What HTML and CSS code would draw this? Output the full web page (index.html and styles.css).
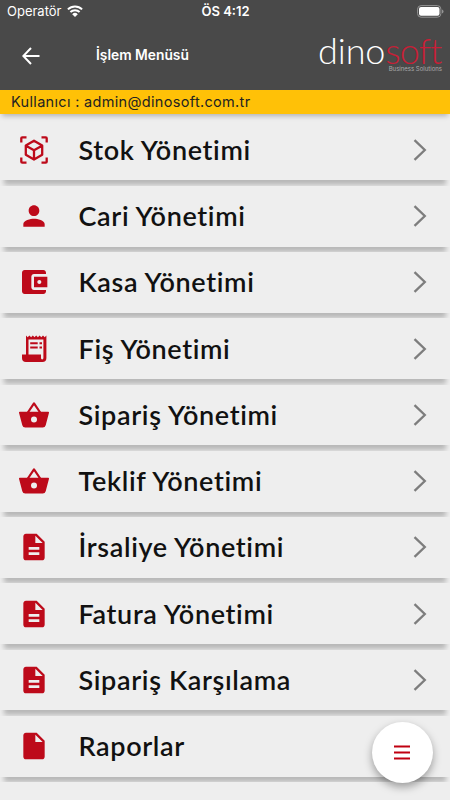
FILE: index.html
```
<!DOCTYPE html>
<html lang="tr">
<head>
  <meta charset="UTF-8">
  <title>İşlem Menüsü</title>
  <link rel="stylesheet" href="styles.css">
</head>
<body>
  <svg class="sprite" aria-hidden="true">
    <symbol id="stock" viewBox="0 0 32 32">
      <path d="M3.300 8.500V4.300q0-1 1-1h4.200M23.500 3.300h4.200q1 0 1 1v4.200M28.700 23.500v4.200q0 1-1 1h-4.200M8.500 28.700H4.300q-1 0-1-1v-4.200M16 6.700l8.200 4.700v9.400L16 25.500l-8.200-4.700v-9.400zM8 11.700l8 4.600 8-4.600M16 16.300v9" fill="none" stroke="currentColor" stroke-width="2.300" stroke-linejoin="round"/>
    </symbol>
    <symbol id="person" viewBox="0 0 24 24">
      <path d="M12 12c2.210 0 4-1.790 4-4s-1.790-4-4-4-4 1.790-4 4 1.790 4 4 4zm0 2c-2.670 0-8 1.340-8 4v2h16v-2c0-2.660-5.330-4-8-4z"/>
    </symbol>
    <symbol id="wallet" viewBox="0 0 24 24">
      <path d="M21 18v1c0 1.100-.9 2-2 2H5c-1.110 0-2-.9-2-2V5c0-1.100.89-2 2-2h14c1.100 0 2 .9 2 2v1h-9c-1.110 0-2 .9-2 2v8c0 1.100.89 2 2 2h9zm-9-2h10V8H12v8zm4-2.500c-.83 0-1.500-.67-1.500-1.500s.67-1.500 1.500-1.500 1.500.67 1.500 1.500-.67 1.500-1.500 1.500z"/>
    </symbol>
    <symbol id="receipt" viewBox="0 0 32 32">
      <path fill-rule="evenodd" d="M8 2.600l1.700 1.600 1.700-1.600 1.700 1.600 1.700-1.600 1.700 1.600 1.700-1.600 1.700 1.600 1.700-1.600 1.700 1.600 1.700-1.600 1.700 1.600 1.700-1.600V25q0 4-4 4H8q-4 0-4-4v-3.500h4zM10.500 6.500v15H23V25q0 1.400 1.200 1.400T25.400 25V6.500z"/>
      <path d="M12.200 9.300h7.500v2h-7.500zM21.500 9.300h2.500v2h-2.500zM12.200 13.600h7.500v2h-7.500zM21.500 13.600h2.500v2h-2.500z"/>
    </symbol>
    <symbol id="basket" viewBox="0 0 32 32">
      <path d="M9.500 14L16 4.300 22.500 14" fill="none" stroke="currentColor" stroke-width="2.200" stroke-linejoin="round"/>
      <path fill-rule="evenodd" d="M1.800 12.700h28.400q1 0 .8 1l-3.300 12.500q-.6 2.300-3 2.300H7.300q-2.400 0-3-2.300L1 13.700q-.2-1 .8-1zM16 17.500a3 3 0 1 0 0 6 3 3 0 1 0 0-6z"/>
    </symbol>
    <symbol id="document" viewBox="0 0 24 24">
      <path d="M14 2H6c-1.100 0-1.990.9-1.990 2L4 20c0 1.100.89 2 1.990 2H18c1.100 0 2-.9 2-2V8l-6-6zm2 16H8v-2h8v2zm0-4H8v-2h8v2zm-3-5V3.500L18.500 9H13z"/>
    </symbol>
    <symbol id="file" viewBox="0 0 24 24">
      <path d="M14 2H6c-1.100 0-2 .9-2 2v16c0 1.100.89 2 2 2h12c1.100 0 2-.9 2-2V8l-6-6zm-1 7V3.500L18.500 9H13z"/>
    </symbol>
    <symbol id="chevron" viewBox="0 0 14 22">
      <path d="M1.500 1.200L11.800 11 1.500 20.800" fill="none" stroke="currentColor" stroke-width="2.300"/>
    </symbol>
  </svg>

  <div class="screen">
    <header class="header">
      <div class="status-bar">
        <div class="carrier">
          <span>Operatör</span>
          <svg class="wifi" viewBox="0 0 16 12">
            <path d="M.9 4.400a10.200 10.200 0 0 1 14.200 0M3.400 7a6.600 6.600 0 0 1 9.200 0" fill="none" stroke="currentColor" stroke-width="2"/>
            <path d="M8 12L5.200 9.200a4 4 0 0 1 5.600 0z"/>
          </svg>
        </div>
        <div class="time">ÖS 4:12</div>
        <svg class="battery" viewBox="0 0 27 13">
          <rect x=".6" y=".6" width="23.300" height="11.600" rx="3.500" fill="none" stroke="#949494"/>
          <rect x="2" y="2" width="20.500" height="8.800" rx="2" fill="#fff"/>
          <path d="M25 4.500q1.500.5 1.500 2t-1.500 2z" fill="#949494"/>
        </svg>
      </div>
      <div class="nav">
        <svg class="back" viewBox="0 0 18 18">
          <path d="M17.500 9H1.500M9 1L1.300 9 9 17" fill="none" stroke="#fff" stroke-width="2"/>
        </svg>
        <h1 class="title">İşlem Menüsü</h1>
        <div class="logo">
          <div class="logo-name">dino<span class="logo-red">soft</span></div>
          <div class="logo-sub">Business Solutions</div>
        </div>
      </div>
    </header>

    <div class="user-bar">Kullanıcı : admin@dinosoft.com.tr</div>

    <div class="menu">
      <div class="item"><svg class="icon"><use href="#stock"/></svg><span class="label">Stok Yönetimi</span><svg class="chevron"><use href="#chevron"/></svg></div>
      <div class="item"><svg class="icon"><use href="#person"/></svg><span class="label">Cari Yönetimi</span><svg class="chevron"><use href="#chevron"/></svg></div>
      <div class="item"><svg class="icon"><use href="#wallet"/></svg><span class="label">Kasa Yönetimi</span><svg class="chevron"><use href="#chevron"/></svg></div>
      <div class="item"><svg class="icon"><use href="#receipt"/></svg><span class="label">Fiş Yönetimi</span><svg class="chevron"><use href="#chevron"/></svg></div>
      <div class="item"><svg class="icon"><use href="#basket"/></svg><span class="label">Sipariş Yönetimi</span><svg class="chevron"><use href="#chevron"/></svg></div>
      <div class="item"><svg class="icon"><use href="#basket"/></svg><span class="label">Teklif Yönetimi</span><svg class="chevron"><use href="#chevron"/></svg></div>
      <div class="item"><svg class="icon"><use href="#document"/></svg><span class="label">İrsaliye Yönetimi</span><svg class="chevron"><use href="#chevron"/></svg></div>
      <div class="item"><svg class="icon"><use href="#document"/></svg><span class="label">Fatura Yönetimi</span><svg class="chevron"><use href="#chevron"/></svg></div>
      <div class="item"><svg class="icon"><use href="#document"/></svg><span class="label">Sipariş Karşılama</span><svg class="chevron"><use href="#chevron"/></svg></div>
      <div class="item"><svg class="icon"><use href="#file"/></svg><span class="label">Raporlar</span></div>
      <div class="menu-end"></div>
    </div>

    <button class="fab" aria-label="Menü">
      <svg viewBox="0 0 16 15"><path d="M0 1.500h16M0 7.500h16M0 13.500h16" stroke="#c00010" stroke-width="2.200"/></svg>
    </button>
  </div>
</body>
</html>
```
FILE: styles.css
```
body {
  margin: 0;
  background: #eee;
  font-family: Inter, sans-serif;
}
.sprite {
  display: none;
}
.screen {
  position: relative;
  width: 450px;
  height: 800px;
  overflow: hidden;
}
.header {
  height: 90px;
  background: #494949;
  color: #fff;
}
.status-bar {
  display: grid;
  grid-template-columns: 1fr auto 1fr;
  align-items: center;
  height: 22px;
  padding: 0 6px 0 7px;
  font-size: 13px;
}
.carrier {
  display: flex;
  align-items: center;
  gap: 5px;
}
.wifi {
  width: 16px;
  height: 12px;
  fill: #fff;
}
.time {
  font-weight: 600;
}
.battery {
  width: 27px;
  height: 13px;
  justify-self: end;
}
.nav {
  display: flex;
  align-items: center;
  height: 66px;
  padding: 0 8px 0 22px;
}
.back {
  width: 18px;
  height: 18px;
  margin-top: 1px;
}
.title {
  margin: 0 0 0 56px;
  font-size: 13.800px;
  font-weight: 600;
}
.logo {
  width: 124px;
  margin-left: auto;
}
.logo-name {
  margin-top: -4px;
  font-family: Lato, sans-serif;
  font-size: 36px;
  font-weight: 300;
  font-feature-settings: "liga" 0;
  line-height: 32px;
  letter-spacing: -0.100px;
  white-space: nowrap;
}
.logo-red {
  color: #c81e36;
  letter-spacing: -0.900px;
}
.logo-sub {
  color: #aaa;
  font-size: 6px;
  line-height: 6px;
  text-align: right;
}
.user-bar {
  position: relative;
  z-index: 1;
  height: 24px;
  padding-left: 11px;
  background: #ffc107;
  box-shadow: 0 4px 5px -2px rgba(0, 0, 0, 0.25);
  color: #222;
  font-size: 14.500px;
  line-height: 23px;
  letter-spacing: 0.320px;
}
.menu {
  display: flex;
  flex-direction: column;
  gap: 5.500px;
  padding-top: 5.500px;
}
.item {
  display: flex;
  align-items: center;
  box-sizing: border-box;
  height: 60.750px;
  padding: 0 23px 0 18px;
  background: #eee;
  box-shadow: 0 9px 5px -4px rgba(0, 0, 0, 0.23);
}
/* closes the list so the last shadow is cut like the others */
.menu-end {
  height: 30px;
  background: #eee;
}
.icon {
  width: 32px;
  height: 32px;
  color: #bd0a1a;
  fill: currentColor;
}
.label {
  flex: 1;
  margin: -1px 0 0 28.500px;
  color: #111;
  font-family: Lato, sans-serif;
  font-size: 27px;
  font-weight: 600;
  font-variant-ligatures: none;
  letter-spacing: 0.650px;
  white-space: nowrap;
}
.chevron {
  width: 14px;
  height: 22px;
  color: #7d7d7d;
}
.fab {
  position: absolute;
  left: 371.500px;
  top: 721.500px;
  display: flex;
  align-items: center;
  justify-content: center;
  width: 61px;
  height: 61px;
  padding: 0;
  border: none;
  border-radius: 50%;
  background: #fff;
  box-shadow: 0 4px 8px rgba(0, 0, 0, 0.35);
}
.fab svg {
  width: 16px;
  height: 15px;
}
```
